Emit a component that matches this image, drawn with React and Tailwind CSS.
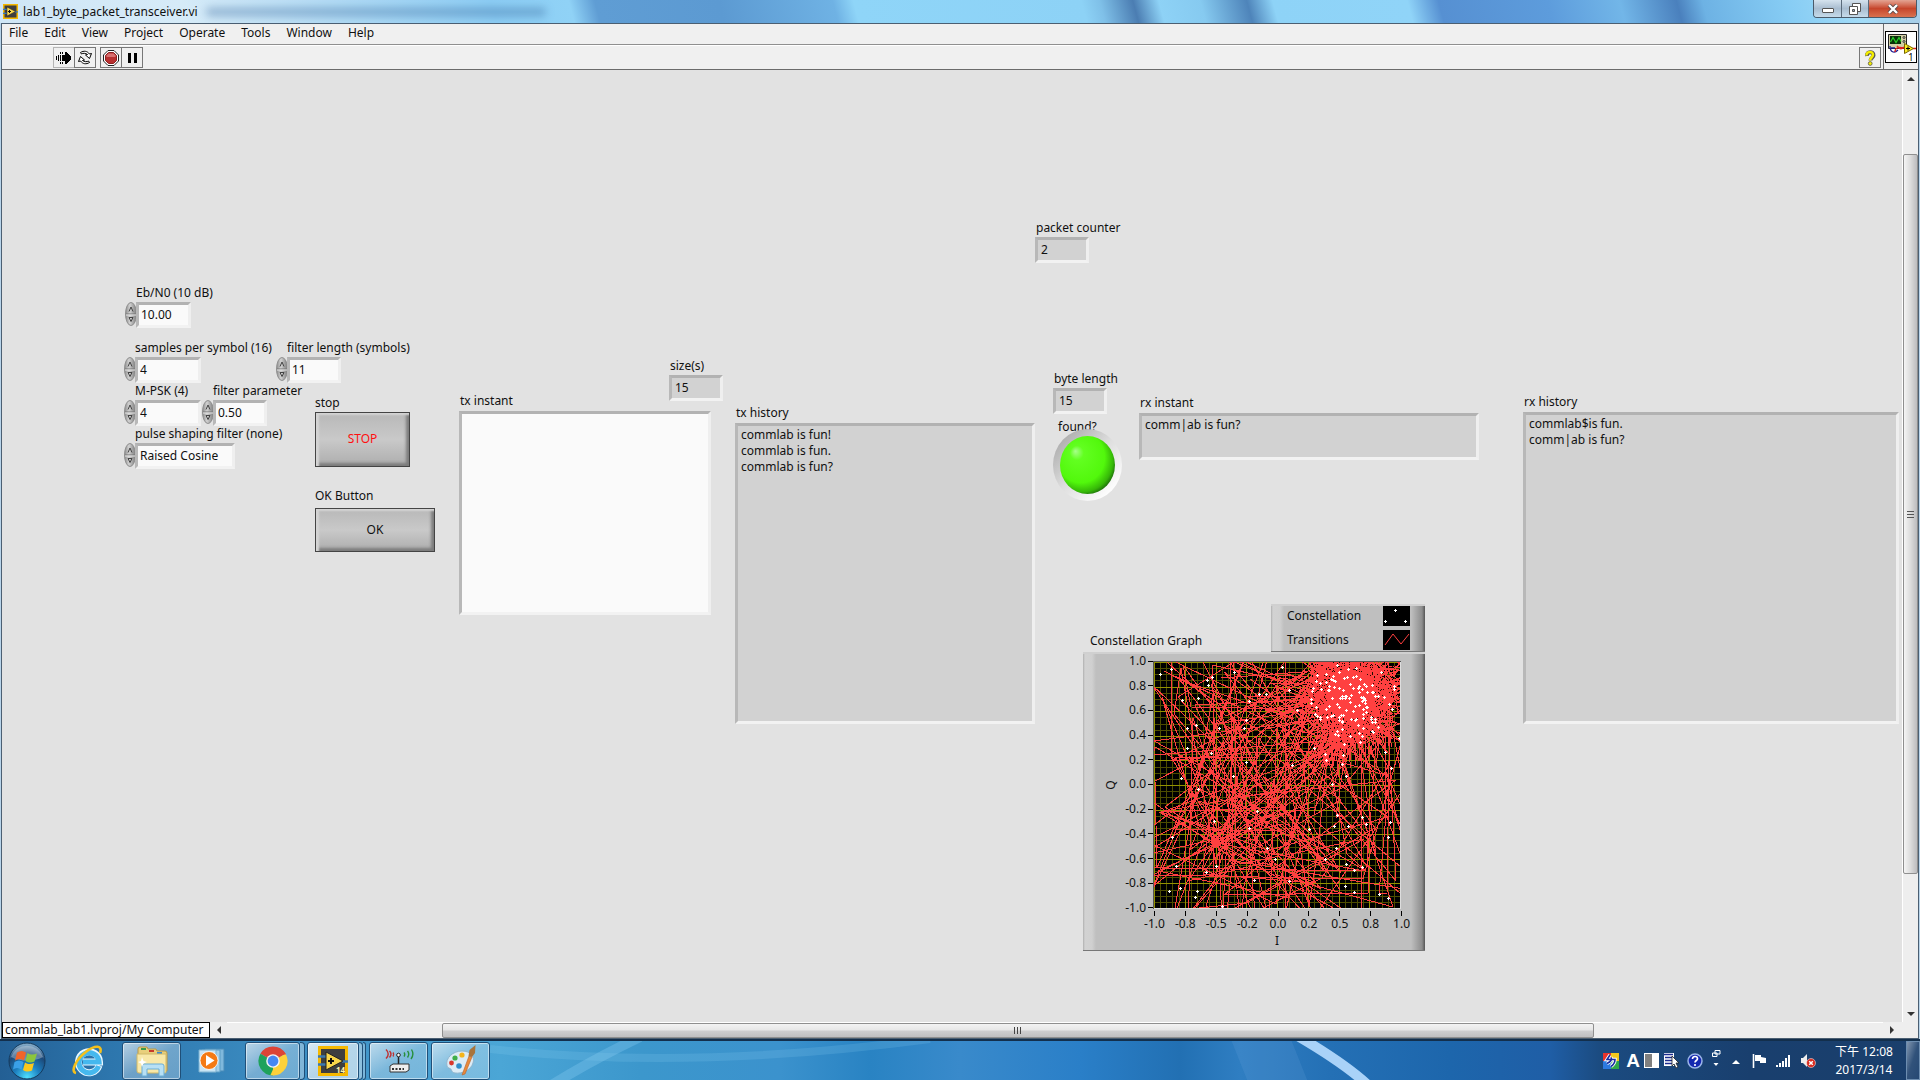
import React from "react";

const FONT = "font-['Noto_Sans','Noto_Sans_CJK_TC',sans-serif]";
const BEVEL = "border-[3px] border-t-[#b2b2b2] border-l-[#b8b8b8] border-r-[#efefef] border-b-[#f2f2f2] rounded-none outline-none";

/* ---------- front panel widgets ---------- */

function Spinner() {
  return (
    <svg width="12" height="24" viewBox="0 0 12 24" className="ml-px block shrink-0" aria-hidden="true">
      <defs>
        <linearGradient id="spin" x1="0" x2="1">
          <stop offset="0" stopColor="#8a8a8a" />
          <stop offset="0.4" stopColor="#d2d2d2" />
          <stop offset="1" stopColor="#7c7c7c" />
        </linearGradient>
      </defs>
      <ellipse cx="6" cy="12" rx="5.500" ry="11.500" fill="url(#spin)" stroke="#8f8f8f" />
      <path d="M1 12h10" stroke="#777" />
      <path d="M1 13h10" stroke="#e8e8e8" />
      <path d="M4 9.500 6 5 8 9.500" fill="none" stroke="#444" />
      <path d="M4 15.500h4L6 19.500z" fill="none" stroke="#444" />
    </svg>
  );
}

function Control({ id, label, value, width, group = "" }) {
  return (
    <div className={`flex flex-col ${group}`}>
      <label htmlFor={id} className="ml-3 h-[17px] leading-4 whitespace-nowrap">{label}</label>
      <div className="flex items-start">
        <Spinner />
        <input id={id} defaultValue={value} className={`${BEVEL} ${width} -ml-px h-[26px] bg-[#fafafa] px-0.5 pb-0.5`} />
      </div>
    </div>
  );
}

function Indicator({ id, label, value, group = "" }) {
  return (
    <div className={`flex flex-col ${group}`}>
      <label htmlFor={id} className="ml-px h-[17px] leading-4 whitespace-nowrap">{label}</label>
      <input id={id} readOnly defaultValue={value} className={`${BEVEL} h-[26px] w-[54px] bg-[#d2d2d2] px-[3px] pb-0.5`} />
    </div>
  );
}

function TextBox({ id, label, value = "", size, tone = "bg-[#d2d2d2]", group = "", readOnly = true }) {
  return (
    <div className={`flex flex-col ${group}`}>
      <label htmlFor={id} className="ml-px h-[18px] leading-4 whitespace-nowrap">{label}</label>
      <textarea id={id} readOnly={readOnly} defaultValue={value}
        className={`${BEVEL} ${size} ${tone} block resize-none overflow-hidden px-[3px] py-px leading-4`} />
    </div>
  );
}

const STEEL = "border border-[#444] bg-linear-to-b from-[#b8b8b8] via-[#c9c9c9] to-[#adadad] shadow-[inset_3px_2px_2px_#d4d4d4,inset_-3px_-3px_3px_#7c7c7c]";

function Led() {
  return (
    <svg width="70" height="73" viewBox="0 0 70 73" className="block" role="img" aria-label="found">
      <defs>
        <linearGradient id="ring" x1="0.1" y1="0.1" x2="0.85" y2="0.9">
          <stop offset="0" stopColor="#ababab" />
          <stop offset="0.5" stopColor="#dedede" />
          <stop offset="1" stopColor="#ffffff" />
        </linearGradient>
        <radialGradient id="lamp" cx="0.42" cy="0.42" r="0.62" fx="0.28" fy="0.26">
          <stop offset="0" stopColor="#a8ff8c" />
          <stop offset="0.2" stopColor="#62ff20" />
          <stop offset="0.7" stopColor="#52f80c" />
          <stop offset="0.9" stopColor="#36b808" />
          <stop offset="1" stopColor="#1c6a0c" />
        </radialGradient>
      </defs>
      <ellipse cx="34.500" cy="36" rx="34.500" ry="36" fill="url(#ring)" />
      <ellipse cx="34.500" cy="36" rx="27.500" ry="29" fill="url(#lamp)" />
    </svg>
  );
}

/* ---------- constellation graph ---------- */

const OUTLIERS = [
  [-0.95, 0.9], [-0.86, 0.94], [-0.57, 0.85], [-0.53, 0.88], [-0.56, 0.81], [-0.35, 0.92], [-0.77, 0.69], [-0.64, 0.71],
  [-0.15, 0.74], [-0.09, 0.74], [-0.23, 0.68], [0.04, 0.96], [0.1, 0.77], [-0.25, 0.53], [-0.27, 0.46], [-0.47, 0.46],
  [-0.66, 0.49], [-0.73, 0.46], [-0.73, 0.3], [-0.54, 0.26], [-0.25, 0.19], [0.12, 0.16], [-0.36, 0.07], [-0.78, 0.06],
  [-0.64, -0.03], [0.45, 0.01], [0.56, 0.07], [-0.16, -0.21], [-0.51, -0.29], [-0.23, -0.35], [0.26, -0.36], [-0.85, -0.42],
  [-0.08, -0.51], [-0.02, -0.6], [-0.82, -0.66], [-0.5, -0.66], [-0.58, -0.71], [-0.19, -0.77], [0.1, -0.78], [-0.88, -0.86],
  [-0.79, -0.84], [-0.65, -0.86], [-0.67, -0.91], [-0.45, -0.98], [0.49, -0.24], [0.69, -0.26], [0.46, -0.33], [0.58, -0.33],
  [0.72, -0.32], [0.92, -0.3], [0.9, -0.42], [0.48, -0.51], [0.39, -0.6], [0.56, -0.64], [0.69, -0.67], [0.63, -0.69],
  [0.55, -0.82], [0.63, -0.87], [0.83, -0.89], [0.9, -0.92], [0.93, 0.14], [0.88, 0.27], [0.99, 0.38], [0.53, 0.17], [0.54, 0.24],
  [0.4, 0.2], [0.39, 0.25], [0.3, 0.3], [0.16, 0.61],
];

function random(seed) {
  let a = seed;
  return () => {
    a = (a + 0x6d2b79f5) | 0;
    let t = Math.imul(a ^ (a >>> 15), 1 | a);
    t = (t + Math.imul(t ^ (t >>> 7), 61 | t)) ^ t;
    return ((t ^ (t >>> 14)) >>> 0) / 4294967296;
  };
}

function buildTraces() {
  const rnd = random(2017);
  const gauss = () => Math.sqrt(-2 * Math.log(rnd() + 1e-9)) * Math.cos(6.283 * rnd());
  const px = (v) => Math.round(1 + (v + 1) * 123);
  const py = (v) => Math.round(247 - (v + 1) * 123);
  const line = (a, b) => `M${px(a[0])} ${py(a[1])}L${px(b[0])} ${py(b[1])}`;
  const around = (c, sx, sy = sx) => [c[0] + gauss() * sx, c[1] + gauss() * sy];

  const symbols = [[-0.55, 0.55], [-0.55, -0.6], [0.6, -0.6], [0.6, 0.72]];
  let wander = "";
  let cur = [-0.5, 0.5];
  for (let i = 0; i < 210; i++) {
    const next = around(symbols[Math.floor(rnd() * 4)], 0.42);
    wander += line(cur, next);
    cur = next;
  }

  const core = [0.6, 0.74];
  let cluster = "";
  cur = core;
  for (let i = 0; i < 520; i++) {
    const next = around(core, 0.18, 0.17);
    cluster += line(cur, next);
    cur = next;
  }
  for (let i = 0; i < 420; i++) cluster += line(around(core, 0.16), around(core, 0.3, 0.29));
  for (let i = 0; i < 40; i++) cluster += line(around(core, 0.1), [core[0] - 0.1 + gauss() * 0.13, 0.1 + rnd() * 0.3]);

  let gaps = "";
  for (let i = 0; i < 420; i++) {
    const a = rnd() * 6.283;
    const r = 0.2 + rnd() * 0.22;
    gaps += `M${px(core[0] + Math.cos(a) * r)} ${py(core[1] + Math.sin(a) * r)}h1v1h-1z`;
  }

  const dots = OUTLIERS.map(([x, y]) => [px(x), py(y)]);
  while (dots.length < OUTLIERS.length + 120) {
    const [x, y] = around([0.62, 0.68], 0.19, 0.18);
    if (x < 0.98 && y < 0.99 && y > 0.3) dots.push([px(x), py(y)]);
  }
  return { wander, cluster, gaps, dots };
}

const TRACES = buildTraces();
const MINOR = Array.from({ length: 41 }, (_, i) => 1 + i * 6.15);
const X_MAJOR = Array.from({ length: 9 }, (_, i) => 1 + i * 30.75);
const Y_MAJOR = Array.from({ length: 11 }, (_, i) => 1 + i * 24.6);
const Y_LABELS = ["1.0", "0.8", "0.6", "0.4", "0.2", "0.0", "-0.2", "-0.4", "-0.6", "-0.8", "-1.0"];
const X_LABELS = ["-1.0", "-0.8", "-0.5", "-0.2", "0.0", "0.2", "0.5", "0.8", "1.0"];

function Plot() {
  return (
    <svg width="248" height="248" viewBox="0 0 248 248" className="block bg-black" shapeRendering="crispEdges" role="img" aria-label="Constellation plot">
      <g stroke="#4c4c00">
        {MINOR.map((v) => <path key={v} d={`M${Math.round(v) + 0.5} 0v248M0 ${Math.round(v) + 0.5}h248`} />)}
      </g>
      <g stroke="#929200">
        {X_MAJOR.map((v) => <path key={v} d={`M${Math.round(v) + 0.5} 0v248`} />)}
        {Y_MAJOR.map((v) => <path key={v} d={`M0 ${Math.round(v) + 0.5}h248`} />)}
      </g>
      <path d={TRACES.wander} stroke="#ff4040" fill="none" />
      <path d={TRACES.cluster} stroke="#ff4040" fill="none" />
      <path d={TRACES.gaps} fill="#200c00" />
      <g fill="#fff">
        {TRACES.dots.map(([x, y], i) => <path key={i} d={`M${x - 1} ${y}h3v1h-3zM${x} ${y - 1}h1v3h-1z`} />)}
      </g>
      <path d="M0.500 248V0.500H248" stroke="#555" fill="none" />
      <path d="M247.500 1V247.500H1" stroke="#ddd" fill="none" />
    </svg>
  );
}

const METAL = "bg-[linear-gradient(to_right,#b0b0b0_0px,#d2d2d2_2px,#d0d0d0_9px,#bfbfbf_13px,#bfbfbf_calc(100%-14px),#8d8d8d_calc(100%-3px),#555_100%)] border-t-2 border-t-[#d0d0d0] border-b border-b-[#777]";

function Graph() {
  return (
    <section className="w-[342px]" aria-label="Constellation Graph">
      <div className="flex items-end justify-between">
        <h2 className="mb-[3px] ml-[7px] leading-4">Constellation Graph</h2>
        <ul className={`${METAL} flex h-12 w-[154px] flex-col gap-1 pr-[15px] pl-4`}>
          <li className="flex h-5 items-center justify-between">
            Constellation
            <svg width="27" height="20" className="bg-black" shapeRendering="crispEdges" aria-hidden="true">
              <path fill="#fff" d="M11 4h3v1h-3zM12 3h1v3h-1zM1 15h3v1h-3zM2 14h1v3h-1zM21 15h3v1h-3zM22 14h1v3h-1z" />
            </svg>
          </li>
          <li className="flex h-5 items-center justify-between">
            Transitions
            <svg width="27" height="20" className="bg-black" aria-hidden="true">
              <path fill="none" stroke="#ff4040" d="M2 15 10 4l8 10L26 4" />
            </svg>
          </li>
        </ul>
      </div>
      <div className={`${METAL} flex h-[299px] pt-[7px] pl-[21px]`}>
        <div className="flex h-[248px] w-3.5 items-center justify-center">
          <span className="-rotate-90">Q</span>
        </div>
        <ol className="-mt-2 flex h-[263px] w-[35px] flex-col justify-between">
          {Y_LABELS.map((t) => (
            <li key={t} className="flex h-4 items-center justify-end gap-0.5 leading-4">
              {t}<i className="h-px w-[5px] bg-black" />
            </li>
          ))}
        </ol>
        <div className="w-[248px]">
          <Plot />
          <ol className="-ml-3.5 flex w-[278px] justify-between">
            {X_LABELS.map((t) => (
              <li key={t} className="flex w-8 flex-col items-center leading-4">
                <i className="mt-0.5 h-[5px] w-px bg-black" />{t}
              </li>
            ))}
          </ol>
          <p className="mt-px text-center leading-4">I</p>
        </div>
      </div>
    </section>
  );
}

/* ---------- window chrome ---------- */

function LabviewIcon({ size, version = false }) {
  return (
    <svg width={size} height={size} viewBox="0 0 30 30" className="block shrink-0" aria-hidden="true">
      <rect x="1.500" y="1.500" width="27" height="27" fill="#3f3f3f" stroke="#f5b800" strokeWidth="3" />
      <path d="M0 10.500h8M0 18.500h8M24 15.500h6" stroke="#3a78b0" strokeWidth="2.500" />
      <path d="M8 6v18l17-9z" fill="#f9d64a" stroke="#222" />
      <path d="M10 15h6M13 12v6" stroke="#111" strokeWidth="2" />
      {version && <text x="18" y="27" fontSize="8" fontWeight="700" fill="#fff3b0" fontFamily="Open Sans">14</text>}
    </svg>
  );
}

function TitleBar() {
  return (
    <header className="flex h-[23px] items-center bg-[linear-gradient(75deg,#cfe6f6_0px,#d6ebf8_180px,#b4dcf5_320px,#8ccdf4_480px,#90d2f6_555px,#5f9dd4_580px,#5c9ad2_700px,#6fb2e4_810px,#8fd5f8_830px,#8dd2f6_1050px,#7fc0e8_1068px,#4b7db2_1100px,#8ed2f6_1125px,#86caf0_1165px,#4e84ba_1210px,#8ed3f7_1235px,#90d4f8_1365px,#5690d2_1395px,#5d9cdc_1500px,#72b6e8_1570px,#4a80bd_1625px,#6db2e4_1650px,#86ccf4_1730px,#a2dcf8_1800px,#a8cce6_100%)]">
      <div className="flex items-center gap-[5px] pl-[3px]">
        <LabviewIcon size={15} />
        <h1 className="leading-5 whitespace-nowrap">lab1_byte_packet_transceiver.vi</h1>
      </div>
      <div className="ml-2 h-2 w-[340px] rounded bg-[#2f5f95]/40 blur-[4px]" />
      <div className="mr-[3px] ml-auto flex h-[18px] self-start overflow-hidden rounded-b border border-t-0 border-[#4a5a6a]">
        <button aria-label="Minimize" className="flex w-[28px] items-center justify-center border-r border-[#5a6a7a] bg-linear-to-b from-[#d5e3ee] via-[#a9bdd0] to-[#c6dbea]">
          <i className="mt-1 h-[5px] w-3 rounded-[1px] border border-[#555] bg-white" />
        </button>
        <button aria-label="Restore" className="flex w-[27px] items-center justify-center border-r border-[#5a6a7a] bg-linear-to-b from-[#d5e3ee] via-[#a9bdd0] to-[#c6dbea]">
          <svg width="12" height="12" aria-hidden="true">
            <path d="M3.500.5h8v8h-8z" fill="#fff" stroke="#555" />
            <path d="M.5 3.500h8v8h-8z" fill="#fff" stroke="#555" />
            <path d="M3.500 6.500h2v2h-2z" fill="#9ab" stroke="#555" />
          </svg>
        </button>
        <button aria-label="Close" className="flex w-[47px] items-center justify-center bg-linear-to-b from-[#e3a493] via-[#c6452b] to-[#d9714f]">
          <svg width="12" height="10" viewBox="0 0 12 10" aria-hidden="true">
            <path d="M2 1 10 9M10 1 2 9" stroke="#5a4a4a" strokeWidth="4" />
            <path d="M2 1 10 9M10 1 2 9" stroke="#fff" strokeWidth="2.400" />
          </svg>
        </button>
      </div>
    </header>
  );
}

const MENUS = ["File", "Edit", "View", "Project", "Operate", "Tools", "Window", "Help"];
const TOOL = "flex h-[21px] w-[22px] items-center justify-center border bg-[#f0f0f0]";

function Bars() {
  return (
    <div className="flex h-[46px] border-b border-[#6b6b6b] bg-[#f0f0f0]">
      <div className="flex min-w-0 flex-1 flex-col">
        <nav className="flex h-[21px] items-start gap-4 border-b border-[#8f8f8f] pl-[7px]">
          {MENUS.map((m) => <button key={m} className="leading-[18px]">{m}</button>)}
        </nav>
        <div className="flex flex-1 items-center border-t border-white pr-0.5 pl-[51px]">
          <button aria-label="Run" className={`${TOOL} border-[#b5b5b5]`}>
            <svg width="16" height="14" viewBox="0 0 16 14" shapeRendering="crispEdges" aria-hidden="true">
              <path d="M7 4h2V1h1l5 5v2l-5 5H9v-3H7z" />
              <path d="M.5 5v4M2.500 4v6M4.500 4v6M6.500 4v6M4.500 1v2M6.500 1v2M4.500 11v2M6.500 11v2" stroke="#000" />
            </svg>
          </button>
          <button aria-label="Run Continuously" className={`${TOOL} -ml-px border-[#777]`}>
            <svg width="16" height="15" viewBox="0 0 16 15" fill="#fff" stroke="#000" aria-hidden="true">
              <path d="M3.500 2.500C7 .5 10 .8 12.500 4l2-.5-2 5-4-3.500 2-.5C8.500 3 6 3 4.500 4z" />
              <path d="M12.500 12.500C9 14.500 6 14.200 3.500 11l-2 .5 2-5 4 3.500-2 .5c2 1.500 4.500 1.500 6 .5z" />
            </svg>
          </button>
          <button aria-label="Abort Execution" className={`${TOOL} ml-1 border-[#777]`}>
            <svg width="16" height="16" viewBox="0 0 16 16" aria-hidden="true">
              <path d="M5 .5h6L15.500 5v6L11 15.500H5L.5 11V5z" fill="#fff" stroke="#222" />
              <path d="M5.500 2.500h5l3 3v5l-3 3h-5l-3-3v-5z" fill="#b83030" stroke="#8c2020" />
              <path d="M5.500 3.500h5l2 2v1.500h-9V5.500z" fill="#d87070" />
            </svg>
          </button>
          <button aria-label="Pause" className={`${TOOL} -ml-px border-[#777]`}>
            <svg width="9" height="10" aria-hidden="true"><path d="M0 0h3v10H0zM6 0h3v10H6z" /></svg>
          </button>
          <button aria-label="Context Help" className={`${TOOL} ml-auto border-[#777]`}>
            <svg width="12" height="16" viewBox="0 0 12 16" aria-hidden="true">
              <path d="M3 6C2.500 1 9.500 1 9.500 5.200 9.500 8 6.500 7.500 6.500 10.500" fill="none" stroke="#555" strokeWidth="4" />
              <path d="M2.500 5.500C2 .8 9 .8 9 4.800 9 7.500 6 7.500 6 10.500" fill="none" stroke="#f4ee00" strokeWidth="2.500" />
              <circle cx="6.200" cy="13.500" r="1.900" fill="#f4ee00" stroke="#555" strokeWidth=".8" />
            </svg>
          </button>
        </div>
      </div>
      <div className="flex w-[35px] items-center justify-center border-l border-[#6b6b6b]">
        <svg width="32" height="32" viewBox="0 0 32 32" className="block" role="img" aria-label="VI icon">
          <rect x=".5" y=".5" width="31" height="31" fill="#fff" stroke="#000" />
          <path d="M3.500 3.500h18v14h-18z" fill="#d2cfa6" stroke="#222" />
          <path d="M5 5h11v8H5z" fill="#083008" />
          <path d="M5.500 11 8 6.500l3 5 3-5 2 4" fill="none" stroke="#27d027" strokeWidth="1.200" />
          <circle cx="19" cy="6.500" r="1" fill="none" stroke="#333" />
          <circle cx="19" cy="10.500" r="1" fill="none" stroke="#333" />
          <path d="M5 15c0 6 4 8 8 4M6 17h4" fill="none" stroke="#1a1a90" strokeWidth="1.300" />
          <path d="M10 21c0-5 4-5 9-4M12 15c3 4 5 3 7 1M28 17.500h3" fill="none" stroke="#e02020" strokeWidth="1.300" />
          <path d="M19.500 12.500v10l9-5z" fill="#ffee20" stroke="#776600" />
          <path d="M21 17.500h4M23 15.500v4" stroke="#000" />
          <text x="23" y="30" fontSize="10" fontFamily="Open Sans" fill="#000">1</text>
        </svg>
      </div>
    </div>
  );
}

function Arrow({ d }) {
  return <svg width="8" height="8" viewBox="0 0 8 8" aria-hidden="true"><path d={d} fill="#333" /></svg>;
}

function VerticalScroll() {
  return (
    <div className="flex w-4 flex-col border-l border-white bg-[#eee]">
      <button aria-label="Scroll up" className="flex h-[17px] items-center justify-center"><Arrow d="M0 6 4 2l4 4z" /></button>
      <div className="flex flex-1 flex-col">
        <div className="flex-[67]" />
        <div className="flex flex-[720] flex-col items-center justify-center gap-0.5 rounded-xs border border-[#8f8f8f] bg-linear-to-r from-[#f5f5f5] via-[#dcdcdc] to-[#bcbcbe]">
          <i className="h-px w-[7px] bg-[#555]" /><i className="h-px w-[7px] bg-[#555]" /><i className="h-px w-[7px] bg-[#555]" />
        </div>
        <div className="flex-[131]" />
      </div>
      <button aria-label="Scroll down" className="flex h-[17px] items-center justify-center"><Arrow d="M0 2h8L4 6z" /></button>
    </div>
  );
}

function HorizontalScroll() {
  return (
    <div className="flex h-4 bg-[#eee]">
      <output className="flex w-[208px] items-center border border-black bg-white pl-0.5 leading-[14px] whitespace-nowrap">commlab_lab1.lvproj/My Computer</output>
      <button aria-label="Scroll left" className="flex w-[17px] items-center justify-center"><Arrow d="M6 0v8L2 4z" /></button>
      <div className="flex flex-1 border-t border-white">
        <div className="flex-[215]" />
        <div className="flex flex-[1152] items-center justify-center gap-0.5 rounded-xs border border-[#8f8f8f] bg-[linear-gradient(#f3f3f3,#e6e6e6_48%,#cfcfd0_52%,#bfbfc0)]">
          <i className="h-[7px] w-px bg-[#444]" /><i className="h-[7px] w-px bg-[#444]" /><i className="h-[7px] w-px bg-[#444]" />
        </div>
        <div className="flex-[290]" />
      </div>
      <button aria-label="Scroll right" className="mr-[18px] flex w-[17px] items-center justify-center"><Arrow d="M2 0v8l4-4z" /></button>
    </div>
  );
}

function FrontPanel() {
  return (
    <main className="flex min-w-0 flex-1 items-start overflow-hidden bg-[#e2e2e2] pl-[121px]">
      <div className="mt-[215px] flex w-48 shrink-0 flex-col">
        <Control id="ebn0" label="Eb/N0 (10 dB)" value="10.00" width="w-[55px]" group="ml-px mb-3" />
        <div className="flex">
          <Control id="sps" label="samples per symbol (16)" value="4" width="w-[66px]" group="w-[152px]" />
          <Control id="flen" label="filter length (symbols)" value="11" width="w-[54px]" group="w-10" />
        </div>
        <div className="flex">
          <Control id="mpsk" label="M-PSK (4)" value="4" width="w-[66px]" group="w-[78px]" />
          <Control id="fpar" label="filter parameter" value="0.50" width="w-[54px]" />
        </div>
        <Control id="pulse" label="pulse shaping filter (none)" value="Raised Cosine" width="w-[100px]" />
      </div>
      <div className="mt-[325px] flex w-36 shrink-0 flex-col items-start">
        <label htmlFor="stop" className="h-[17px] leading-4">stop</label>
        <button id="stop" className={`${STEEL} h-[55px] w-[95px] pb-0.5 text-[#ff1010]`}>STOP</button>
        <label htmlFor="ok" className="mt-[21px] h-5 leading-4">OK Button</label>
        <button id="ok" className={`${STEEL} h-11 w-[120px]`}>OK</button>
      </div>
      <div className="mt-[288px] w-[276px] shrink-0">
        <Indicator id="size" label="size(s)" value="15" group="ml-[210px]" />
        <TextBox id="txi" label="tx instant" size="h-[204px] w-[252px]" tone="bg-[#fafafa]" readOnly={false} group="-mt-2 w-[200px]" />
      </div>
      <TextBox id="txh" label="tx history" size="h-[301px] w-[300px]" group="mt-[335px] shrink-0"
        value={"commlab is fun!\ncommlab is fun.\ncommlab is fun?"} />
      <div className="mt-[150px] w-[488px] shrink-0">
        <Indicator id="count" label="packet counter" value="2" />
        <div className="mt-[108px] ml-[18px] flex items-start">
          <div className="flex w-[86px] flex-col">
            <Indicator id="blen" label="byte length" value="15" />
            <span className="mt-[5px] ml-[5px] h-2.5 leading-4">found?</span>
            <Led />
          </div>
          <TextBox id="rxi" label="rx instant" value="comm|ab is fun?" size="h-[47px] w-[340px]" group="mt-6" />
        </div>
        <div className="mt-[102px] ml-12"><Graph /></div>
      </div>
      <TextBox id="rxh" label="rx history" size="h-[312px] w-full" group="mt-[324px] mr-[3px] flex-1"
        value={"commlab$is fun.\ncomm|ab is fun?"} />
    </main>
  );
}

/* ---------- taskbar ---------- */

const TASK = "flex h-[38px] items-center justify-center rounded-[3px] border border-[#1f4f78] bg-linear-to-br from-white/65 via-white/30 to-white/25 shadow-[inset_0_0_0_1px_rgba(255,255,255,0.5)]";

function StartOrb() {
  return (
    <svg width="38" height="38" viewBox="0 0 38 38" className="block" aria-hidden="true">
      <defs>
        <radialGradient id="orb" cx="0.5" cy="0.95" r="0.9">
          <stop offset="0" stopColor="#4fe0ff" />
          <stop offset="0.4" stopColor="#1c7fc0" />
          <stop offset="0.75" stopColor="#1c4878" />
          <stop offset="1" stopColor="#7fa6c4" />
        </radialGradient>
      </defs>
      <circle cx="19" cy="19" r="18" fill="url(#orb)" stroke="#153a5c" />
      <path d="M3 15a17 17 0 0 1 32 0c-10 5-22 5-32 0z" fill="#fff" opacity=".3" />
      <path d="M9 10.500c3-2 6-2 9 0l-2 8c-3-2-6-2-9 0z" fill="#f0642a" />
      <path d="M19.500 11c3 2 6 2 9.500.5l-2.500 8c-3 1.500-6 1.500-9-.5z" fill="#8cc63c" />
      <path d="M6.500 20c3-2 6-2 9 0l-2 7.500c-3-2-6-2-8.500 0z" fill="#3aa0e8" />
      <path d="M17 20.500c3 2 6 2 9 .5l-2 7.500c-3 1.500-6 1.500-9-.5z" fill="#fcc81c" />
    </svg>
  );
}

function Explorer() {
  return (
    <svg width="34" height="32" viewBox="0 0 34 32" aria-hidden="true">
      <path d="M3 4q0-2 2-2h7l1 2h8l1 2h8q2 0 2 2v18H3z" fill="#e8cf7c" stroke="#b89848" />
      <path d="M6 3h5v2H6z" fill="#3a9a4a" /><path d="M14 5h5v2h-5z" fill="#c83a2a" /><path d="M22 7h5v2h-5z" fill="#3a8ad0" />
      <path d="M2 9h29v18q0 1-1 1H4q-2 0-2-2z" fill="#f8e8a8" stroke="#d0b868" />
      <path d="M7 31V21q0-2 2-2h18q2 0 2 2v10h-5v-7H12v7z" fill="#b8e0f4" stroke="#6aaed6" />
      <path d="m7 12 1.500 4L12 17l-3.500 1.500L7 22l-1-3.500L3 17l3-1z" fill="#fff" />
    </svg>
  );
}

function Taskbar() {
  return (
    <footer className="flex h-[41px] items-center overflow-hidden border-t-2 border-[#132f4c] bg-[linear-gradient(to_right,#235f94_0px,#2d76ad_110px,#3d8fc4_300px,#4ba6d6_500px,#3c97cc_640px,#3b92cd_780px,#2983c3_870px,#398acb_960px,#2a7fc8_1080px,#2270b3_1180px,#2f7ec2_1240px,#2470b5_1330px,#1d66ac_1450px,#1f5ea6_1550px,#1b4b80_1600px,#193f6e_1750px,#1a3f6c_100%)]">
      <button aria-label="Start" className="ml-2 w-[38px]"><StartOrb /></button>
      <button aria-label="Internet Explorer" className="ml-[26px] flex w-[32px] justify-center">
        <svg width="32" height="32" viewBox="0 0 32 32" aria-hidden="true">
          <path d="M27 20.500A10.500 10.500 0 1 1 27.500 17H11" fill="none" stroke="#eaf7ff" strokeWidth="7" />
          <path d="M26.500 21A10 10 0 1 1 27 17H11" fill="none" stroke="#45b8ee" strokeWidth="5.200" />
          <path d="M4 28C-2 27 4 14 15 6 23 0 31 0 28 8" fill="none" stroke="#f4c01c" strokeWidth="2.600" />
        </svg>
      </button>
      <button aria-label="Explorer" className={`${TASK} ml-[18px] w-[59px]`}><Explorer /></button>
      <button aria-label="Media Player" className="ml-[17px] flex w-7 justify-center">
        <svg width="28" height="26" viewBox="0 0 28 26" aria-hidden="true">
          <path d="M7 1h19v22H7z" fill="#7fb8dc" stroke="#4a8cb8" />
          <path d="M4 2h18v22H4z" fill="#a4d0ea" stroke="#5a9cc4" />
          <path d="M1 2h17v22H1z" fill="#c8e4f4" stroke="#7ab0d0" />
          <circle cx="11" cy="12.500" r="9" fill="#f47a14" stroke="#fff" strokeWidth=".8" />
          <path d="M8 7v11l8.500-5.500z" fill="#fff" />
        </svg>
      </button>
      <div className="ml-[19px] flex">
        <button aria-label="Chrome" className={`${TASK} w-[55px]`}>
          <svg width="30" height="30" viewBox="0 0 30 30" aria-hidden="true">
            <path d="M15 15 2.440 7.750A14.500 14.500 0 0 1 27.560 7.750z" fill="#dc4437" />
            <path d="M15 15 27.560 7.750A14.500 14.500 0 0 1 15 29.500z" fill="#fdd13a" />
            <path d="M15 15v14.500A14.500 14.500 0 0 1 2.440 7.750z" fill="#1fa25c" />
            <path d="M15 8.500h12.900l-1-2L15 6z" fill="#dc4437" />
            <path d="M20.600 18.300 15 29.500l-2.500-.5 4-9z" fill="#fdd13a" />
            <circle cx="15" cy="15" r="6.800" fill="#f4f4f4" />
            <circle cx="15" cy="15" r="5.400" fill="#4687f2" />
          </svg>
        </button>
        <i className="h-[38px] w-[5px] rounded-r border border-l-0 border-[#1f4f78] bg-white/35" />
      </div>
      <div className="ml-0.5 flex">
        <button aria-label="LabVIEW" className={`${TASK} w-[52px] bg-white/45`}><LabviewIcon size={30} version /></button>
        <i className="h-[38px] w-[4px] rounded-r border border-l-0 border-[#1f4f78] bg-white/40" />
        <i className="h-[38px] w-[3px] rounded-r border border-l-0 border-[#1f4f78] bg-white/30" />
      </div>
      <button aria-label="Measurement Explorer" className={`${TASK} ml-[3px] w-[59px]`}>
        <svg width="30" height="26" viewBox="0 0 30 26" fill="none" aria-hidden="true">
          <path d="M2 1.500q4.500 4.500 0 9M5.500 3q3 3 0 6.500M9 4.500q1.500 2 0 4" stroke="#c03030" strokeWidth="1.400" />
          <path d="M27.500 1.500q3 5-.5 9.500M23.500 3q2.500 3 0 6.500M20 4.500q1.500 2 0 4" stroke="#28903c" strokeWidth="1.400" />
          <circle cx="14.500" cy="7" r="1.800" fill="#fff" stroke="#222" />
          <path d="M14.500 9v8" stroke="#222" strokeWidth="1.500" />
          <path d="m6 18 3-2h16v6l-3 2H6z" fill="#eee" stroke="#333" />
          <path d="M8 21h12" stroke="#333" strokeWidth="2" strokeDasharray="2 1.500" />
        </svg>
      </button>
      <button aria-label="Paint" className={`${TASK} ml-[3px] w-[59px]`}>
        <svg width="32" height="32" viewBox="0 0 32 32" aria-hidden="true">
          <path d="M2 21C0 13 8 6 17 6c9 0 13 6 11 12-2 7-11 11-18 10-4-.5-3-4-5-4.500-1.500-.5-2.500-1-3-2.500z" fill="#dcecf6" stroke="#8fb4cc" />
          <circle cx="10" cy="13" r="2.600" fill="#3fae4a" /><circle cx="17" cy="10" r="2.600" fill="#f4b41c" />
          <circle cx="6.500" cy="18" r="2.400" fill="#d8382c" /><circle cx="14" cy="21" r="2.800" fill="#2f8fcc" />
          <path d="m17 30 7-19 3 1-7 17z" fill="#e88a3a" stroke="#b8602a" strokeWidth=".6" />
          <path d="m23.500 11 1-6 6-5-.5 8-3 4z" fill="#a8743c" />
        </svg>
      </button>
      <svg height="41" viewBox="0 0 1100 41" className="w-[1100px] min-w-0 shrink self-stretch" preserveAspectRatio="xMinYMin slice" aria-hidden="true">
        <path d="M150-4Q100 20 60 45" fill="none" stroke="#8fd0f4" strokeWidth="10" opacity=".3" />
        <path d="M0 8Q200 30 440-2" fill="none" stroke="#8fd0f4" strokeWidth="8" opacity=".18" />
        <path d="M740-4h60l20 50h-60z" fill="#6fa8dc" opacity=".18" />
        <path d="M806-6C830 8 862 28 882 48" fill="none" stroke="#a9d2f8" strokeWidth="10" />
      </svg>
      <div className="ml-auto flex items-center text-white">
        <svg width="16" height="16" viewBox="0 0 16 16" aria-hidden="true">
          <path d="M0 0h8v8H0z" fill="#e8342c" /><path d="M8 0h8v8H8z" fill="#f4c81c" /><path d="M0 8h8v8H0z" fill="#2c7ae0" /><path d="M8 8h8v8H8z" fill="#30a848" />
          <path d="M7 2 4 6.500h8q0 4-4 7M8 4.500q2 3-4 6" fill="none" stroke="#fff" strokeWidth="3.400" />
          <path d="M7 2 4 6.500h8q0 4-4 7M8 4.500q2 3-4 6" fill="none" stroke="#1a2ca0" strokeWidth="1.600" />
        </svg>
        <span className="ml-1.5 w-4 text-center font-['Liberation_Sans'] text-[19px] leading-4 font-bold">A</span>
        <svg width="15" height="15" className="ml-[3px]" aria-hidden="true"><path d="M0 0h15v15H0z" fill="#fff" /><path d="M1 1h7v13H1z" fill="#808080" /></svg>
        <svg width="16" height="15" viewBox="0 0 16 15" className="ml-[5px]" aria-hidden="true">
          <path d="M0 0h10v13H0z" fill="#fff" /><path d="M0 1.500h9M1 4.500h8M1 7.500h7M1 10.500h7" stroke="#1c2c90" strokeWidth="1.500" />
          <path d="m8 3 7 7h-3l2 4-2 1-2-4-2 2z" fill="#fff" stroke="#222" strokeWidth=".8" />
        </svg>
        <svg width="16" height="16" viewBox="0 0 16 16" className="ml-[7px]" aria-hidden="true">
          <circle cx="8" cy="8" r="7" fill="#1428b0" stroke="#9ab4e8" strokeWidth="1.500" />
          <path d="M5.500 6c0-3.500 5-3 5-.3C10.500 7.500 8 7.500 8 9.500" fill="none" stroke="#fff" strokeWidth="1.700" /><circle cx="8" cy="12" r="1.100" fill="#fff" />
        </svg>
        <svg width="9" height="18" viewBox="0 0 9 18" className="mb-1 ml-[9px]" aria-hidden="true">
          <path d="M3 .5h5v3.500H3zM.5 3h4.500v3.500H.5z" fill="#1b4b80" stroke="#fff" /><path d="M1.500 13h5L4 16z" fill="#fff" />
        </svg>
        <svg width="8" height="5" className="mt-1 ml-[11px]" aria-hidden="true"><path d="M0 4 4 0l4 4z" fill="#fff" /></svg>
        <svg width="16" height="16" viewBox="0 0 16 16" className="ml-3" aria-hidden="true">
          <path d="M1.500 1v14" stroke="#fff" strokeWidth="1.600" /><path d="M3 2h6v2l5 1v5H8V8H3z" fill="#fff" />
        </svg>
        <svg width="16" height="13" className="ml-2" aria-hidden="true"><path d="M0 11h2v2H0zM3 9h2v4H3zM6 7h2v6H6zM9 4h2v9H9zM12 1h2v12h-2z" fill="#fff" /></svg>
        <svg width="16" height="15" viewBox="0 0 16 15" className="ml-2" aria-hidden="true">
          <path d="M1 5h2l4-4v13L3 10H1z" fill="#eee" /><circle cx="11" cy="10" r="4.500" fill="#d82c20" stroke="#fff" strokeWidth=".5" />
          <path d="m9.200 8.200 3.600 3.600M12.800 8.200 9.200 11.800" stroke="#fff" strokeWidth="1.500" />
        </svg>
        <time className="ml-[14px] w-[68px] text-center leading-[18px] whitespace-nowrap">下午 12:08<br />2017/3/14</time>
        <button aria-label="Show desktop" className="ml-2 h-[39px] w-[14px] border border-[#6c8db0] bg-linear-to-br from-white/45 via-white/10 to-white/5" />
      </div>
    </footer>
  );
}

export default function App() {
  return (
    <div className={`${FONT} flex min-h-screen flex-col bg-[#b8d4ea] text-[12px] text-[#101010]`}>
      <TitleBar />
      <div className="mr-px ml-px flex flex-1 flex-col border border-[#4b5f72]">
        <Bars />
        <div className="flex flex-1">
          <FrontPanel />
          <VerticalScroll />
        </div>
        <HorizontalScroll />
      </div>
      <Taskbar />
    </div>
  );
}
